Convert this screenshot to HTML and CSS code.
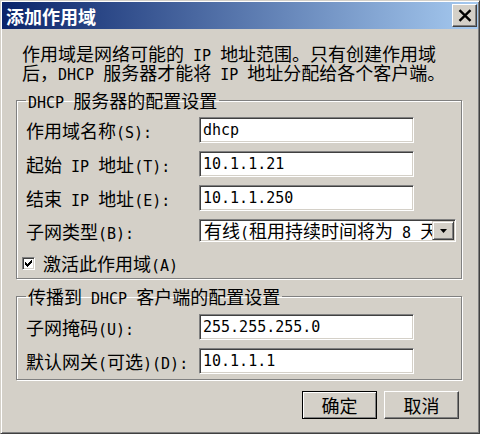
FILE: index.html
```html
<!DOCTYPE html>
<html lang="zh-CN">
<head>
<meta charset="utf-8">
<title>添加作用域</title>
<link rel="stylesheet" href="styles.css">
</head>
<body>
<div class="window">
  <div class="titlebar">
    <span class="title">添加作用域</span>
    <div class="close">
      <svg width="14" height="13" viewBox="0 0 14 13"><path d="M1.5 1.2 L12.5 11.8 M12.5 1.2 L1.5 11.8" stroke="#000" stroke-width="2.4" fill="none"/></svg>
    </div>
  </div>
  <div class="content">
    <p class="desc"><span class="line">作用域是网络可能的<span class="en"> IP </span>地址范围。只有创建作用域</span><span class="line">后，<span class="en">DHCP </span>服务器才能将<span class="en"> IP </span>地址分配给各个客户端。</span></p>
    <fieldset class="group g1">
      <legend><span class="en">DHCP </span>服务器的配置设置</legend>
      <div class="rows">
        <div class="row"><span class="label">作用域名称<span class="en">(S):</span></span><div class="field en">dhcp</div></div>
        <div class="row"><span class="label">起始<span class="en"> IP </span>地址<span class="en">(T):</span></span><div class="field en">10.1.1.21</div></div>
        <div class="row"><span class="label">结束<span class="en"> IP </span>地址<span class="en">(E):</span></span><div class="field en">10.1.1.250</div></div>
        <div class="row"><span class="label">子网类型<span class="en">(B):</span></span>
          <div class="combo"><span class="combo-text">有线<span class="en">(</span>租用持续时间将为<span class="en"> 8 </span>天<span class="en">)</span></span>
            <div class="drop"><svg width="7" height="4" viewBox="0 0 7 4"><path d="M0 0h7L3.5 4z" fill="#000"/></svg></div>
          </div>
        </div>
      </div>
      <div class="check-row">
        <span class="checkbox"><svg width="7" height="7" viewBox="0 0 7 7" shape-rendering="crispEdges"><path d="M6 0h1v3h-1z M5 1h1v3h-1z M4 2h1v3h-1z M3 3h1v3h-1z M2 4h1v3h-1z M1 3h1v3h-1z M0 2h1v3h-1z" fill="#000"/></svg></span>
        <span>激活此作用域<span class="en">(A)</span></span>
      </div>
    </fieldset>
    <fieldset class="group g2">
      <legend>传播到<span class="en"> DHCP </span>客户端的配置设置</legend>
      <div class="rows">
        <div class="row"><span class="label">子网掩码<span class="en">(U):</span></span><div class="field en">255.255.255.0</div></div>
        <div class="row"><span class="label">默认网关<span class="en">(</span>可选<span class="en">)(D):</span></span><div class="field en">10.1.1.1</div></div>
      </div>
    </fieldset>
    <div class="buttons">
      <button class="btn default">确定</button>
      <button class="btn">取消</button>
    </div>
  </div>
</div>
</body>
</html>
```
FILE: styles.css
```css
* { box-sizing: border-box; }
html, body { margin: 0; padding: 0; }
body {
  width: 480px;
  height: 434px;
  background: #d4d0c8;
  font-family: "Noto Sans CJK SC", sans-serif;
  font-size: 18px;
  color: #000;
  overflow: hidden;
}
.en {
  font-family: "DejaVu Sans Mono", "Liberation Mono", monospace;
  font-size: 15px;
  line-height: 1;
  white-space: pre;
}
.window {
  width: 480px;
  height: 434px;
  border: 1px solid;
  border-color: #d4d0c8 #404040 #404040 #d4d0c8;
  box-shadow: inset 1px 1px 0 #fff, inset -1px -1px 0 #808080;
  padding: 1px;
  background: #d4d0c8;
  display: flex;
  flex-direction: column;
}
.titlebar {
  height: 27px;
  flex: none;
  display: flex;
  align-items: center;
  justify-content: space-between;
  padding: 0 1px 0 4px;
  background: linear-gradient(to right, #0a246a, #a6caf0);
}
.title {
  color: #fff;
  font-weight: bold;
  font-size: 18px;
  line-height: 20px;
}
.close {
  width: 25px;
  height: 23px;
  background: #d4d0c8;
  border: 1px solid;
  border-color: #fff #404040 #404040 #fff;
  box-shadow: inset -1px -1px 0 #808080;
  display: flex;
  align-items: center;
  justify-content: center;
}
.close svg { display: block; }
.content {
  padding: 15px 0 0 14px;
}
.desc {
  margin: 0 0 0 6px;
  white-space: nowrap;
}
.desc .line {
  display: block;
  height: 19px;
  line-height: 19px;
}
.group {
  margin: 8px 0 0 0;
  width: 446px;
  min-width: 0;
  border: 1px solid #808080;
  box-shadow: inset 1px 1px 0 #fff, 1px 1px 0 #fff;
  padding: 7px 0 5px 9px;
}
.group legend {
  padding: 0 2px;
  height: 20px;
  line-height: 20px;
  white-space: nowrap;
}
.g2 { margin-top: 7px; padding-top: 8px; }
.rows {
  display: flex;
  flex-direction: column;
  gap: 8px;
}
.row {
  display: flex;
  align-items: center;
}
.label {
  width: 173px;
  height: 20px;
  flex: none;
  line-height: 20px;
  white-space: nowrap;
}
.field {
  width: 215px;
  height: 26px;
  background: #fff;
  border: 1px solid;
  border-color: #808080 #fff #fff #808080;
  box-shadow: inset 1px 1px 0 #404040, inset -1px -1px 0 #d4d0c8;
  padding: 0 3px;
  white-space: nowrap;
}
.field.en { line-height: 24px; }
.combo {
  width: 257px;
  height: 23px;
  flex: none;
  background: #fff;
  border: 1px solid;
  border-color: #808080 #fff #fff #808080;
  box-shadow: inset 1px 1px 0 #404040, inset -1px -1px 0 #d4d0c8;
  padding: 1px;
  display: flex;
}
.combo-text {
  flex: 1;
  min-width: 0;
  overflow: hidden;
  white-space: nowrap;
  line-height: 19px;
  height: 19px;
  padding-left: 2px;
  margin-left: 1px;
}
.drop {
  width: 22px;
  height: 19px;
  flex: none;
  background: #d4d0c8;
  border: 1px solid;
  border-color: #d4d0c8 #404040 #404040 #d4d0c8;
  box-shadow: inset 1px 1px 0 #fff, inset -1px -1px 0 #808080;
  display: flex;
  align-items: center;
  justify-content: center;
}
.drop svg { display: block; }
.check-row {
  margin: 11px 0 0 -4px;
  display: flex;
  align-items: center;
  gap: 8px;
  height: 20px;
  line-height: 20px;
}
.checkbox {
  width: 13px;
  height: 13px;
  flex: none;
  background: #fff;
  border: 1px solid;
  border-color: #808080 #fff #fff #808080;
  box-shadow: inset 1px 1px 0 #404040, inset -1px -1px 0 #d4d0c8;
  display: flex;
  align-items: center;
  justify-content: center;
}
.checkbox svg { display: block; }
.buttons {
  width: 446px;
  margin-top: 11px;
  padding-right: 3px;
  display: flex;
  justify-content: flex-end;
  gap: 7px;
}
.btn {
  width: 75px;
  height: 28px;
  margin: 0;
  padding: 0;
  font: inherit;
  font-size: 18px;
  line-height: 20px;
  color: #000;
  background: #d4d0c8;
  border: 1px solid;
  border-color: #fff #404040 #404040 #fff;
  box-shadow: inset -1px -1px 0 #808080;
}
.btn.default {
  border-color: #000;
  box-shadow: inset 1px 1px 0 #fff, inset -1px -1px 0 #808080;
}
```
